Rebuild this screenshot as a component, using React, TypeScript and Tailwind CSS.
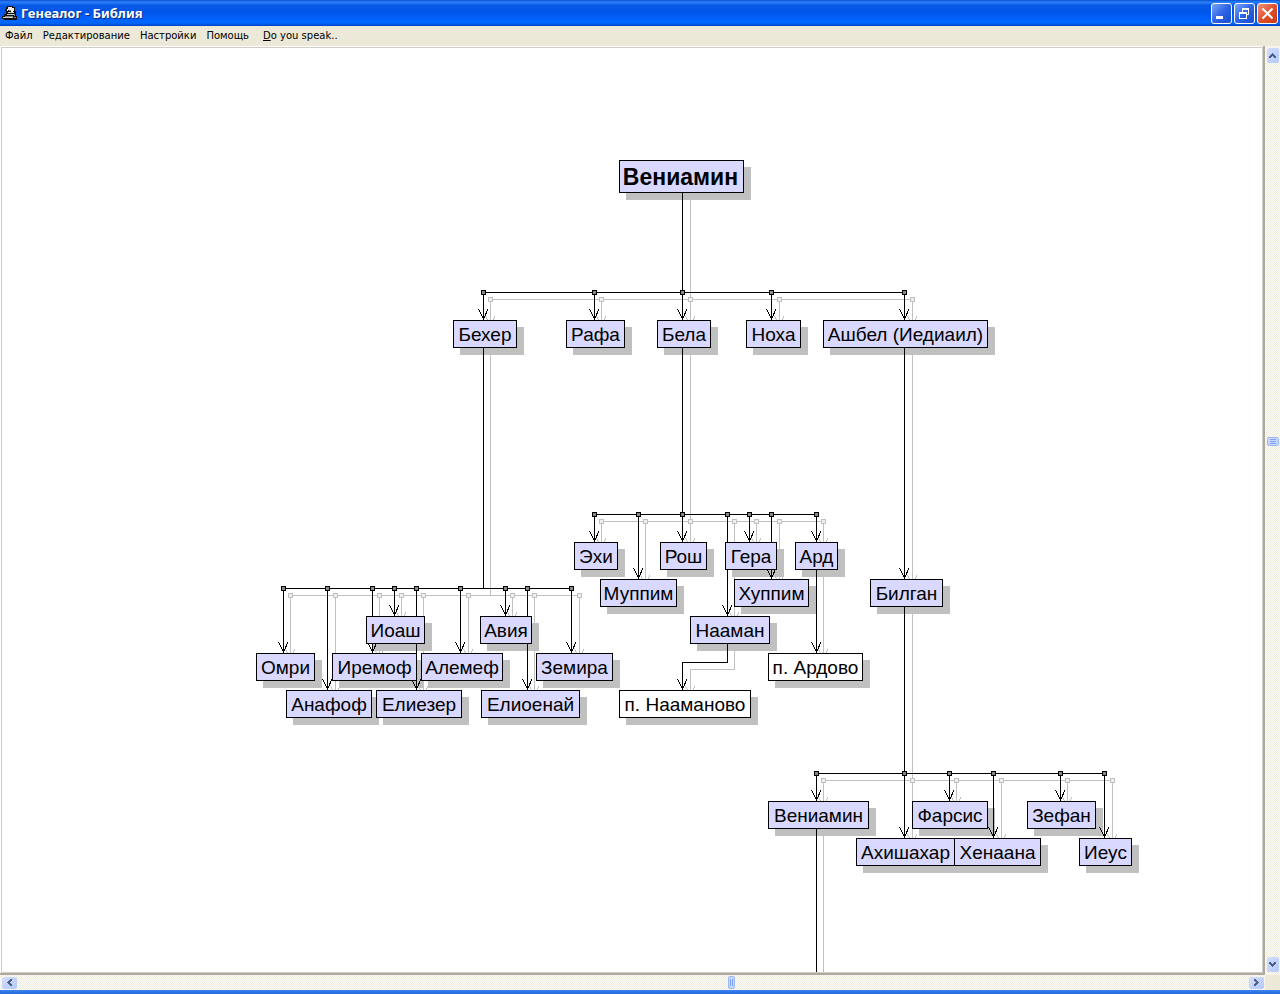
import { ReactNode } from 'react';

type Person = {
  name: string;
  x: number;
  row: number;
  width: number;
  place?: boolean;
};

type Branch = {
  barRow: number;
  parent: number;
  parentBottom: number;
  children: [col: number, row: number][];
};

// Tree grid
const BOX_HEIGHT = 28;
const col = (k: number, shift = 0) => Math.floor(680.9 + 22.2 * k + shift);
const rowTop = (row: number) => 272 + 37 * row;
const rowBottom = (row: number) => rowTop(row) + BOX_HEIGHT;

const people: Person[] = [
  { name: 'Бехер', x: 451, row: 0, width: 64 },
  { name: 'Рафа', x: 564, row: 0, width: 59 },
  { name: 'Бела', x: 655, row: 0, width: 54 },
  { name: 'Ноха', x: 744, row: 0, width: 55 },
  { name: 'Ашбел (Иедиаил)', x: 821, row: 0, width: 165 },
  { name: 'Эхи', x: 572, row: 6, width: 44 },
  { name: 'Рош', x: 658, row: 6, width: 47 },
  { name: 'Гера', x: 723, row: 6, width: 52 },
  { name: 'Ард', x: 793, row: 6, width: 43 },
  { name: 'Муппим', x: 598, row: 7, width: 77 },
  { name: 'Хуппим', x: 732, row: 7, width: 75 },
  { name: 'Билган', x: 868, row: 7, width: 73 },
  { name: 'Иоаш', x: 364, row: 8, width: 59 },
  { name: 'Авия', x: 478, row: 8, width: 52 },
  { name: 'Нааман', x: 688, row: 8, width: 80 },
  { name: 'Омри', x: 254, row: 9, width: 59 },
  { name: 'Иремоф', x: 330, row: 9, width: 85 },
  { name: 'Алемеф', x: 419, row: 9, width: 82 },
  { name: 'Земира', x: 534, row: 9, width: 77 },
  { name: 'п. Ардово', x: 766, row: 9, width: 95, place: true },
  { name: 'Анафоф', x: 284, row: 10, width: 86 },
  { name: 'Елиезер', x: 374, row: 10, width: 86 },
  { name: 'Елиоенай', x: 479, row: 10, width: 99 },
  { name: 'п. Нааманово', x: 617, row: 10, width: 132, place: true },
  { name: 'Вениамин', x: 766, row: 13, width: 101 },
  { name: 'Фарсис', x: 910, row: 13, width: 76 },
  { name: 'Зефан', x: 1025, row: 13, width: 69 },
  { name: 'Ахишахар', x: 854, row: 14, width: 99 },
  { name: 'Хенаана', x: 952, row: 14, width: 87 },
  { name: 'Иеус', x: 1077, row: 14, width: 53 },
];

const branches: Branch[] = [
  { barRow: 0, parent: 0, parentBottom: 145, children: [[-9, 0], [-4, 0], [0, 0], [4, 0], [10, 0]] },
  { barRow: 6, parent: 0, parentBottom: rowBottom(0), children: [[-4, 6], [-2, 7], [0, 6], [2, 8], [3, 6], [4, 7], [6, 6]] },
  {
    barRow: 8,
    parent: -9,
    parentBottom: rowBottom(0),
    children: [[-18, 9], [-16, 10], [-14, 9], [-13, 8], [-12, 10], [-10, 9], [-8, 8], [-7, 10], [-5, 9]],
  },
  { barRow: 13, parent: 10, parentBottom: rowBottom(7), children: [[6, 13], [10, 14], [12, 13], [14, 14], [17, 13], [19, 14]] },
];

const menu = ['Файл', 'Редактирование', 'Настройки', 'Помощь'];

function Arrow({ x, y }: { x: number; y: number }) {
  return <path d={`M${x - 4.5} ${y - 11}L${x + 0.5} ${y - 1}L${x + 5} ${y - 11}`} />;
}

function Lines({ shadow = false }: { shadow?: boolean }) {
  const dx = shadow ? 7.4 : 0;
  const dy = shadow ? 7 : 0;
  const at = (k: number) => col(k, dx);

  return (
    <g
      fill="none"
      stroke={shadow ? '#c0c0c0' : '#000'}
      shapeRendering="crispEdges"
    >
      {branches.map((branch) => {
        const bar = rowTop(branch.barRow) - BOX_HEIGHT + dy;
        const cols = branch.children.map(([k]) => at(k));
        return (
          <g key={branch.barRow}>
            <path d={`M${at(branch.parent) + 0.5} ${branch.parentBottom + dy}V${bar}`} />
            <path d={`M${cols[0]} ${bar + 0.5}H${cols[cols.length - 1]}`} />
            {branch.children.map(([k, row]) => (
              <g key={k}>
                <path d={`M${at(k) + 0.5} ${bar}V${rowTop(row) + dy}`} />
                <Arrow x={at(k)} y={rowTop(row) + dy} />
              </g>
            ))}
            {cols.map((x) => (
              <rect key={x} x={x - 1.5} y={bar - 1.5} width="4" height="4" fill={shadow ? '#eee' : '#888'} />
            ))}
          </g>
        );
      })}
      <path d={`M${at(10) + 0.5} ${rowBottom(0) + dy}V${rowTop(7) + dy}`} />
      <Arrow x={at(10)} y={rowTop(7) + dy} />
      <path d={`M${at(6) + 0.5} ${rowBottom(6) + dy}V${rowTop(9) + dy}`} />
      <Arrow x={at(6)} y={rowTop(9) + dy} />
      <path d={`M${at(2) + 0.5} ${rowBottom(8) + dy}V${614.5 + dy}H${at(0) + 0.5}V${rowTop(10) + dy}`} />
      <Arrow x={at(0)} y={rowTop(10) + dy} />
      <path d={`M${at(6) + 0.5} ${rowBottom(13) + dy}V2000`} />
    </g>
  );
}

function Tree() {
  return (
    <>
      <svg className="absolute inset-0 h-full w-full" aria-hidden="true">
        <g fill="#c0c0c0">
          <rect x="624" y="119" width="125" height="33" />
          {people.map((p) => (
            <rect key={p.name + p.row} x={p.x + 7} y={rowTop(p.row) + 7} width={p.width} height={BOX_HEIGHT} />
          ))}
        </g>
        <Lines shadow />
        <Lines />
      </svg>
      <div className="absolute top-[112px] left-[617px] flex h-[33px] w-[125px] items-center justify-center border border-black bg-[#d9d9ff] pt-[2px] pr-[2px] text-[23px] font-bold">
        Вениамин
      </div>
      {people.map((p) => (
        <div
          key={p.name + p.row}
          className={`absolute flex h-7 items-center justify-center border border-black pt-px text-[19px] leading-[26px] whitespace-nowrap ${
            p.place ? 'bg-white' : 'bg-[#d9d9ff]'
          }`}
          style={{ left: p.x, top: rowTop(p.row), width: p.width }}
        >
          {p.name}
        </div>
      ))}
    </>
  );
}

function WindowButton({ label, close, children }: { label: string; close?: boolean; children: ReactNode }) {
  return (
    <button
      type="button"
      aria-label={label}
      className={`flex h-[21px] w-[21px] items-center justify-center rounded-[3px] border border-white bg-linear-to-br ${
        close ? 'from-[#f09078] via-[#e0502c] to-[#c83c10]' : 'from-[#7aa4f8] via-[#2e63e4] to-[#1a4cd0]'
      }`}
    >
      <svg className="shrink-0" width="19" height="19" viewBox="0 0 19 19" fill="none" stroke="#fff" shapeRendering="crispEdges">
        {children}
      </svg>
    </button>
  );
}

function ScrollButton({ label, vertical, d }: { label: string; vertical?: boolean; d: string }) {
  return (
    <button
      type="button"
      aria-label={label}
      className={`flex items-center justify-center rounded-xs bg-linear-to-br from-[#d2defe] to-[#b4c8fa] ${
        vertical ? 'h-[15px] w-3' : 'h-3 w-[15px]'
      }`}
    >
      <svg width="9" height="9" viewBox="0 0 9 9" fill="#4d6185" shapeRendering="crispEdges">
        <path d={d} />
      </svg>
    </button>
  );
}

const track = 'bg-[repeating-conic-gradient(#ece9d8_0_25%,#ffffff_0_50%)] bg-size-[2px_2px]';

export default function App() {
  return (
    <div className="flex h-screen flex-col overflow-hidden bg-[#ece9d8] font-['Liberation_Sans',sans-serif] text-black">
      <header className="flex h-[26px] shrink-0 items-center bg-[linear-gradient(180deg,#0a4fd0_0%,#2a82fa_8%,#0a5ae8_20%,#0054e6_45%,#0060fa_70%,#0068ff_88%,#0050d8_96%,#0040c0_100%)] pr-[2px] pl-[2px]">
        <svg width="16" height="16" viewBox="0 0 16 16" shapeRendering="crispEdges" aria-hidden="true">
          <path d="M5 1h6v1h2v4h1v5h1v4H2v-1H0v-3h2V9h2V6H3V4h1V2h1z" fill="#111" />
          <path d="M6 2h4v1h2v3h-1v1H9V5H6zM5 4h1v2H5z" fill="#eee" />
          <path d="M6 7h6v1H6zM5 9h7v1H5zM1 12h10v1H1z" fill="#c8c8c8" />
          <path d="M3 11h8v1H3zM12 9h1v2h-1zM12 12h2v1h-2zM7 5h2v1H7z" fill="#888" />
        </svg>
        <h1 className="ml-[3px] flex-1 font-['Noto_Sans',sans-serif] text-[13px] leading-5 font-bold text-white [text-shadow:1px_1px_#0a2a80]">
          Генеалог - Библия
        </h1>
        <div className="flex gap-[2px]">
          <WindowButton label="Свернуть">
            <path d="M4 13.5h7" strokeWidth="3" />
          </WindowButton>
          <WindowButton label="Восстановить">
            <path d="M7.5 8V5.5h6v5H12M7 4.5h7" />
            <path d="M4.5 9.5h7v5h-7zM4 8.5h8" />
          </WindowButton>
          <WindowButton label="Закрыть" close>
            <path d="M4.5 4.5l10 10M14.5 4.5l-10 10" strokeWidth="2" shapeRendering="auto" />
          </WindowButton>
        </div>
      </header>

      <nav className="flex h-5 shrink-0 items-center gap-[10px] pb-[2px] pl-[5px] font-['DejaVu_Sans',sans-serif] text-[10px]">
        {menu.map((item) => (
          <button key={item} type="button">
            {item}
          </button>
        ))}
        <button type="button" className="ml-1">
          <span className="underline">D</span>o you speak..
        </button>
      </nav>

      <div className="flex min-h-0 flex-1">
        <main className="min-w-0 flex-1 border-r-2 border-b-2 border-[#b0aa9c] bg-white pt-px pl-px">
          <div className="relative h-full overflow-hidden border border-[#d0cdc6]">
            <Tree />
          </div>
        </main>
        <div className={`flex w-[15px] shrink-0 flex-col items-center justify-between pt-[2px] pb-[3px] ${track}`}>
          <ScrollButton label="Вверх" vertical d="M4 2h1v1h1v1h1v1h1v2H6V6H5V5H4v1H3v1H1V5h1V4h1V3h1z" />
          <div className="mb-[138px] flex h-[9px] w-3 flex-col items-center justify-center gap-px rounded-xs border border-[#9cb8f4] bg-[#c8d8fe]">
            <span className="h-px w-[6px] bg-[#7c9fee]" />
            <span className="h-px w-[6px] bg-[#7c9fee]" />
            <span className="h-px w-[6px] bg-[#7c9fee]" />
          </div>
          <ScrollButton label="Вниз" vertical d="M4 7h1V6h1V5h1V4h1V2H6v1H5v1H4V3H3V2H1v2h1v1h1v1h1z" />
        </div>
      </div>

      <div className="flex h-[15px] shrink-0">
        <div className={`flex flex-1 items-center justify-between pr-px pl-[2px] ${track}`}>
          <ScrollButton label="Влево" d="M2 4h1V3h1V2h1V1h2v2H6v1H5v1h1v1h1v2H5V7H4V6H3V5H2z" />
          <div className="ml-[196px] flex h-[13px] w-[7px] items-center justify-center gap-px rounded-xs border border-[#9cb8f4] bg-[#c8d8fe]">
            <span className="h-[7px] w-px bg-[#7c9fee]" />
            <span className="h-[7px] w-px bg-[#7c9fee]" />
          </div>
          <ScrollButton label="Вправо" d="M7 4H6V3H5V2H4V1H2v2h1v1h1v1H3v1H2v2h2V7h1V6h1V5h1z" />
        </div>
        <div className="w-[15px]" />
      </div>
      <footer className="h-1 shrink-0 bg-linear-to-b from-[#3c84f0] to-[#2468dc]" />
    </div>
  );
}
